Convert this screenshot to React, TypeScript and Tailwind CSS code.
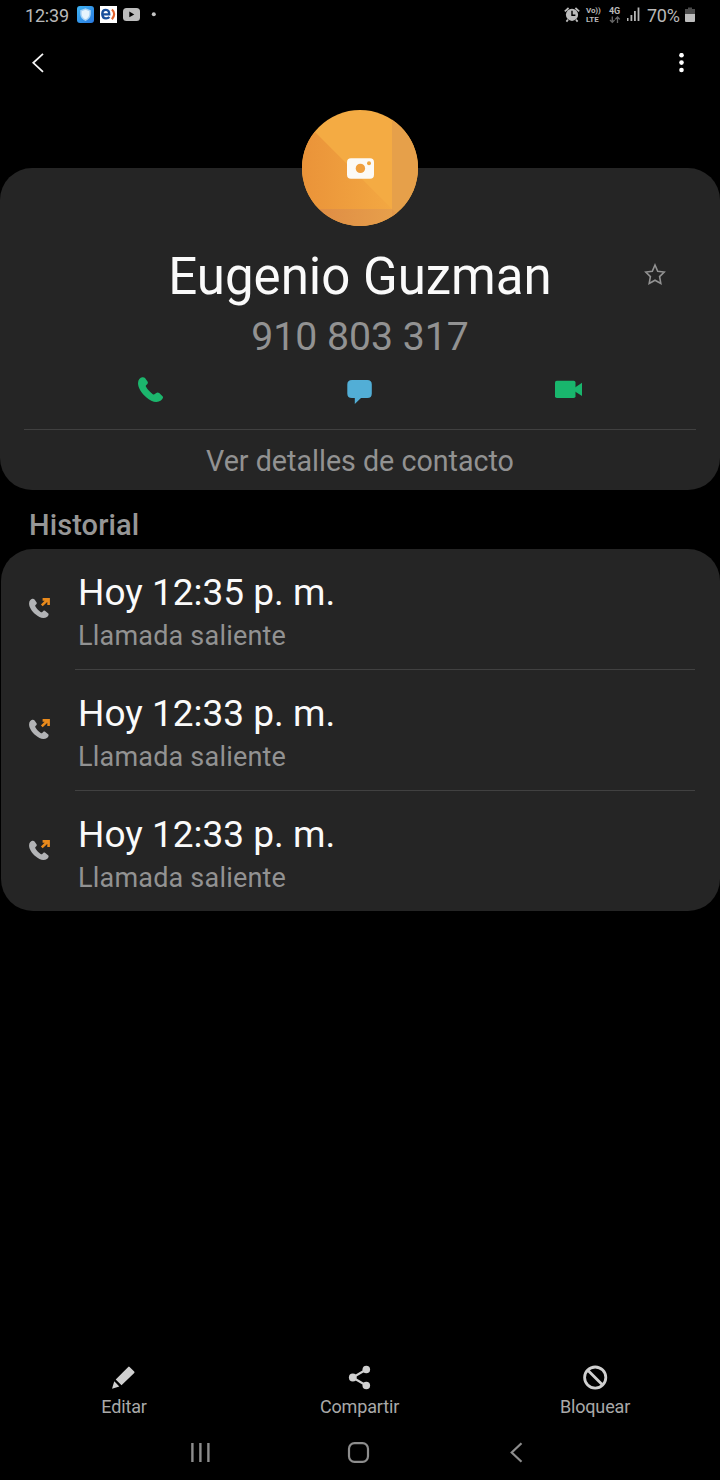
import React from 'react';

const CALLS = [
    { id: 1, time: 'Hoy 12:35 p. m.', type: 'Llamada saliente' },
    { id: 2, time: 'Hoy 12:33 p. m.', type: 'Llamada saliente' },
    { id: 3, time: 'Hoy 12:33 p. m.', type: 'Llamada saliente' },
];

const HANDSET = 'M5.2 1.2C3.2 1.6 1 3.6 1 7.2C1 12 5 17.5 9.2 21.2C12.6 24.2 16 26 19.3 26C23 26 25.6 23.6 26 21.6C26.1 20.9 25.9 20.4 25.3 19.9L22.2 17.1C21.2 16.2 20.1 16.2 19.2 17L17.9 18.1C17.2 18.7 16.6 18.7 15.8 18.2C13 16.3 10.8 13.8 9 10.8C8.6 10.1 8.8 9.6 9.3 9.1L10.2 8.3C11 7.6 11.1 6.5 10.5 5.6L8 2.1C7.3 1.2 6.3 1 5.2 1.2Z';

const StatusBar: React.FC = () => (
    <div className="flex h-[30px] items-center justify-between pl-[25px] pr-[25px] text-[#b9b9b9]">
        <div className="flex items-center">
            <span className="w-[52px] text-[18px] leading-[30px] tracking-[-0.2px] pt-px">12:39</span>
            <svg width="80" height="30" viewBox="77 0 80 30">
                <defs>
                    <linearGradient id="shieldBg" x1="0" y1="0" x2="1" y2="1">
                        <stop offset="0" stopColor="#3fb4f4" />
                        <stop offset="1" stopColor="#2979e0" />
                    </linearGradient>
                </defs>
                <rect x="77" y="6" width="17" height="17" rx="3" fill="url(#shieldBg)" />
                <path d="M85.5 8.2L90.8 10.3V14C90.8 17.3 88.5 19.8 85.5 21C82.5 19.8 80.2 17.3 80.2 14V10.3Z" fill="#a9d4f7" />
                <path d="M85.5 9.8L89.3 11.3V14C89.3 16.5 87.6 18.3 85.5 19.3C83.4 18.3 81.7 16.5 81.7 14V11.3Z" fill="#e6f4fd" />
                <rect x="100" y="6" width="17" height="17" fill="#fff" />
                <path d="M103.2 14.4H109.2C109.2 11.4 108.1 9.9 105.9 9.9C103.6 9.9 102.3 11.6 102.3 14.1C102.3 16.8 103.8 18.4 106.1 18.4C107.5 18.4 108.6 17.9 109.4 17" fill="none" stroke="#174f9c" strokeWidth="2.4" />
                <path d="M111.9 9.5C114.9 12 114.9 16 111.9 19.3" fill="none" stroke="#e2622d" strokeWidth="2.2" />
                <rect x="123" y="8" width="17" height="13" rx="3.5" fill="#bdbdbd" />
                <path d="M129.3 11.6V17.2L134.3 14.4Z" fill="#000" />
                <circle cx="153.8" cy="14.2" r="2" fill="#c4c4c4" />
            </svg>
        </div>
        <div className="flex items-center">
            <svg width="17" height="30" viewBox="564 0 17 30" className="mr-[4px]">
                <circle cx="572" cy="14.8" r="6.1" fill="#bdbdbd" />
                <path d="M564.8 11.4L568.6 8M579.2 11.4L575.4 8M568 19.6L566.4 21.6M576 19.6L577.6 21.6" stroke="#bdbdbd" strokeWidth="1.7" />
                <path d="M572 10.8V15.2H575.4" fill="none" stroke="#000" strokeWidth="1.4" />
            </svg>
            <div className="flex w-[24px] flex-col pl-px text-[8px] leading-[9px] font-bold tracking-[-0.1px]">
                <span>Vo))</span>
                <span>LTE</span>
            </div>
            <div className="flex w-[17px] flex-col">
                <span className="text-[9px] leading-[9px] font-bold tracking-[-0.2px]">4G</span>
                <svg width="12" height="8" viewBox="0 0 12 8" fill="none" stroke="#666" strokeWidth="1.3">
                    <path d="M3.3 0.5V6M1 4L3.3 6.4L5.6 4M8.5 7V1.5M6.2 3.4L8.5 1L10.8 3.4" />
                </svg>
            </div>
            <svg width="14" height="30" viewBox="626 0 14 30" className="mr-[7px]" fill="#b5b5b5">
                <rect x="627" y="18" width="1.5" height="3" />
                <rect x="630.5" y="15" width="1.8" height="6" />
                <rect x="634" y="11" width="1.8" height="10" />
                <rect x="637.6" y="7.5" width="1.8" height="13.5" />
            </svg>
            <span className="w-[38px] text-[18px] leading-[30px] tracking-[-0.3px] pt-px">70%</span>
            <svg width="10" height="30" viewBox="685 0 10 30">
                <path d="M688 7.5H692V9H695V14H685V9H688Z" fill="#4b4b4b" />
                <path d="M685 14H695V21Q695 22 694 22H686Q685 22 685 21Z" fill="#bdbdbd" />
            </svg>
        </div>
    </div>
);

const Avatar: React.FC = () => (
    <svg width="116" height="116" viewBox="302 110 116 116">
        <defs>
            <clipPath id="avatarClip">
                <circle cx="360" cy="168" r="58" />
            </clipPath>
            <linearGradient id="avatarShade" x1="0" y1="0" x2="1" y2="0">
                <stop offset="0" stopColor="#ea9339" />
                <stop offset="1" stopColor="#f3a842" />
            </linearGradient>
            <linearGradient id="avatarBottom" x1="0" y1="0" x2="1" y2="0">
                <stop offset="0" stopColor="#dd8943" />
                <stop offset="1" stopColor="#e79f4b" />
            </linearGradient>
        </defs>
        <g clipPath="url(#avatarClip)">
            <rect x="302" y="110" width="116" height="116" fill="#f4ab43" />
            <path d="M302 119L392 209H302Z" fill="url(#avatarShade)" />
            <rect x="392" y="110" width="26" height="116" fill="#e6a04a" />
            <rect x="302" y="209" width="90" height="17" fill="url(#avatarBottom)" />
            <path d="M392 209L409 226H392Z" fill="#e3994a" />
        </g>
        <rect x="347" y="158.3" width="27" height="20.5" rx="4" fill="#fcfaf6" />
        <circle cx="360.4" cy="168.4" r="4.7" fill="#f0a03f" />
        <circle cx="369" cy="163.3" r="2" fill="#f0a640" />
    </svg>
);

const CallIcon: React.FC = () => (
    <svg width="24" height="24" viewBox="28 596 24 24">
        <path d={HANDSET} transform="translate(28.3 597.8) scale(0.78)" fill="#b3b4b6" />
        <path d="M41.8 605.4L47.6 599.8M42.6 599.4H48.6V605" fill="none" stroke="#e98a1c" strokeWidth="2.6" />
    </svg>
);

const App: React.FC = () => {
    return (
        <div className="flex h-[1480px] w-[720px] flex-col overflow-hidden bg-black font-['Roboto',sans-serif]">
            <StatusBar />

            <div className="flex h-[65px] items-center justify-between pl-[31px] pr-[34px]">
                <svg width="14" height="20" viewBox="31 53 14 20" fill="none" stroke="#f5f5f5" strokeWidth="1.8">
                    <path d="M43 53.8L33.3 62.8L43 71.8" />
                </svg>
                <svg width="9" height="20" viewBox="677 53 9 20" fill="#fff">
                    <circle cx="681.5" cy="55.2" r="2.3" />
                    <circle cx="681.5" cy="62.6" r="2.3" />
                    <circle cx="681.5" cy="70" r="2.3" />
                </svg>
            </div>

            {/* Contact card, the avatar hangs over its top edge */}
            <div className="mt-[73px] flex h-[322px] shrink-0 flex-col items-center rounded-[32px] bg-[#252525]">
                <div className="-mt-[58px] h-[116px]">
                    <Avatar />
                </div>
                <div className="grid h-[89px] w-full grid-cols-[1fr_auto_1fr] items-center pt-[13px]">
                    <h1 className="col-start-2 text-[51px] leading-[76px] text-[#fafafa]">Eugenio Guzman</h1>
                    <svg width="24" height="24" viewBox="643 262 24 24" className="mr-[53px] -mt-[6px] justify-self-end" fill="none" stroke="#929292" strokeWidth="1.6">
                        <path d="M655 265L657.7 271.2L664.2 272L659.6 276.6L660.8 283.4L655 280.2L649.2 283.4L650.4 276.6L645.8 272L652.3 271.2Z" />
                    </svg>
                </div>
                <p className="h-[44px] text-[39.2px] leading-[44px] text-[#929292]">910 803 317</p>
                <div className="flex h-[70px] w-full items-center justify-between px-[137px] pb-[9px]">
                    <svg width="27" height="28" viewBox="0 0 27 28">
                        <path d={HANDSET} fill="#1cb66d" />
                    </svg>
                    <svg width="26" height="28" viewBox="347 376 26 28" fill="#52aed6">
                        <path d="M352 380H367.3Q371.8 380 371.8 384.5V393.5Q371.8 398 367.3 398H361L354.8 404V398H352Q347.3 398 347.3 393.5V384.5Q347.3 380 352 380Z" />
                    </svg>
                    <svg width="28" height="28" viewBox="555 376 28 28" fill="#19b66d">
                        <rect x="555" y="380.8" width="20.5" height="17.2" rx="1.8" />
                        <path d="M575 387.6L582 382.8V396L575 391.4Z" />
                    </svg>
                </div>
                <div className="flex h-[61px] w-[672px] justify-center border-t border-[#404040] text-[28.65px] leading-[62px] text-[#929292]">
                    Ver detalles de contacto
                </div>
            </div>

            <h2 className="h-[59px] shrink-0 pl-[29px] pt-[6px] text-[29px] leading-[58px] font-medium tracking-[0.1px] text-[#969696]">Historial</h2>

            <div className="ml-px flex h-[362px] shrink-0 flex-col rounded-[32px] bg-[#252525]">
                {CALLS.map((call, i) => (
                    <div key={call.id} className="flex h-[121px] shrink-0 pl-[27px] pr-[25px]">
                        <div className="w-[47px] pt-[47px]">
                            <CallIcon />
                        </div>
                        <div className={`flex-1 pl-[3px] pt-[21px] ${i < CALLS.length - 1 ? 'border-b border-[#414141]' : ''}`}>
                            <p className="text-[37px] leading-[46px] text-[#fafafa]">{call.time}</p>
                            <p className="text-[27px] leading-[40px] tracking-[0.2px] text-[#929292]">{call.type}</p>
                        </div>
                    </div>
                ))}
            </div>

            <div className="mt-auto flex h-[68px] justify-between pl-[84px] pr-[85px] text-[18px] leading-[24px] tracking-[-0.15px] text-[#a9a9a9]">
                <button className="flex w-20 flex-col items-center">
                    <svg width="28" height="33" viewBox="110 1362 28 33" fill="#d0d0d0">
                        <path d="M128.2 1366.9Q128.9 1366.2 129.6 1366.9L134.2 1371.5Q134.9 1372.2 134.2 1372.9L121.5 1385.2L115.7 1379.5Z" />
                        <path d="M114.3 1381.3L119.3 1386.4L112 1388.8Z" />
                    </svg>
                    Editar
                </button>
                <button className="flex w-20 flex-col items-center">
                    <svg width="28" height="33" viewBox="346 1362 28 33" fill="#d0d0d0">
                        <path d="M366.3 1369.5L352.6 1377.5L366.3 1385.5" fill="none" stroke="#d0d0d0" strokeWidth="2.1" />
                        <circle cx="366.3" cy="1369.5" r="3.8" />
                        <circle cx="352.8" cy="1377.5" r="3.9" />
                        <circle cx="366.3" cy="1385.5" r="3.8" />
                    </svg>
                    Compartir
                </button>
                <button className="flex w-20 flex-col items-center">
                    <svg width="28" height="33" viewBox="581 1362 28 33" fill="none" stroke="#d0d0d0" strokeWidth="2.8">
                        <circle cx="595.2" cy="1377.6" r="10.6" />
                        <path d="M587.8 1370.2L602.6 1385" />
                    </svg>
                    Bloquear
                </button>
            </div>

            <div className="flex h-[50px] items-center pb-[5px] pl-[190px]">
                <svg width="22" height="24" viewBox="190 1441 22 24" className="mr-[134px]" stroke="#8d8d8d" strokeWidth="2.4">
                    <path d="M192.4 1443V1462M200.4 1443V1462M208.4 1443V1462" />
                </svg>
                <svg width="24" height="24" viewBox="346 1441 24 24" className="mr-[138px]" fill="none" stroke="#8d8d8d" strokeWidth="2.2">
                    <rect x="349" y="1443.2" width="19" height="18.6" rx="5.5" />
                </svg>
                <svg width="16" height="24" viewBox="508 1441 16 24" fill="none" stroke="#8d8d8d" strokeWidth="2.2">
                    <path d="M521.5 1443.2L511.7 1452.5L521.5 1461.8" />
                </svg>
            </div>
        </div>
    );
};

export default App;
